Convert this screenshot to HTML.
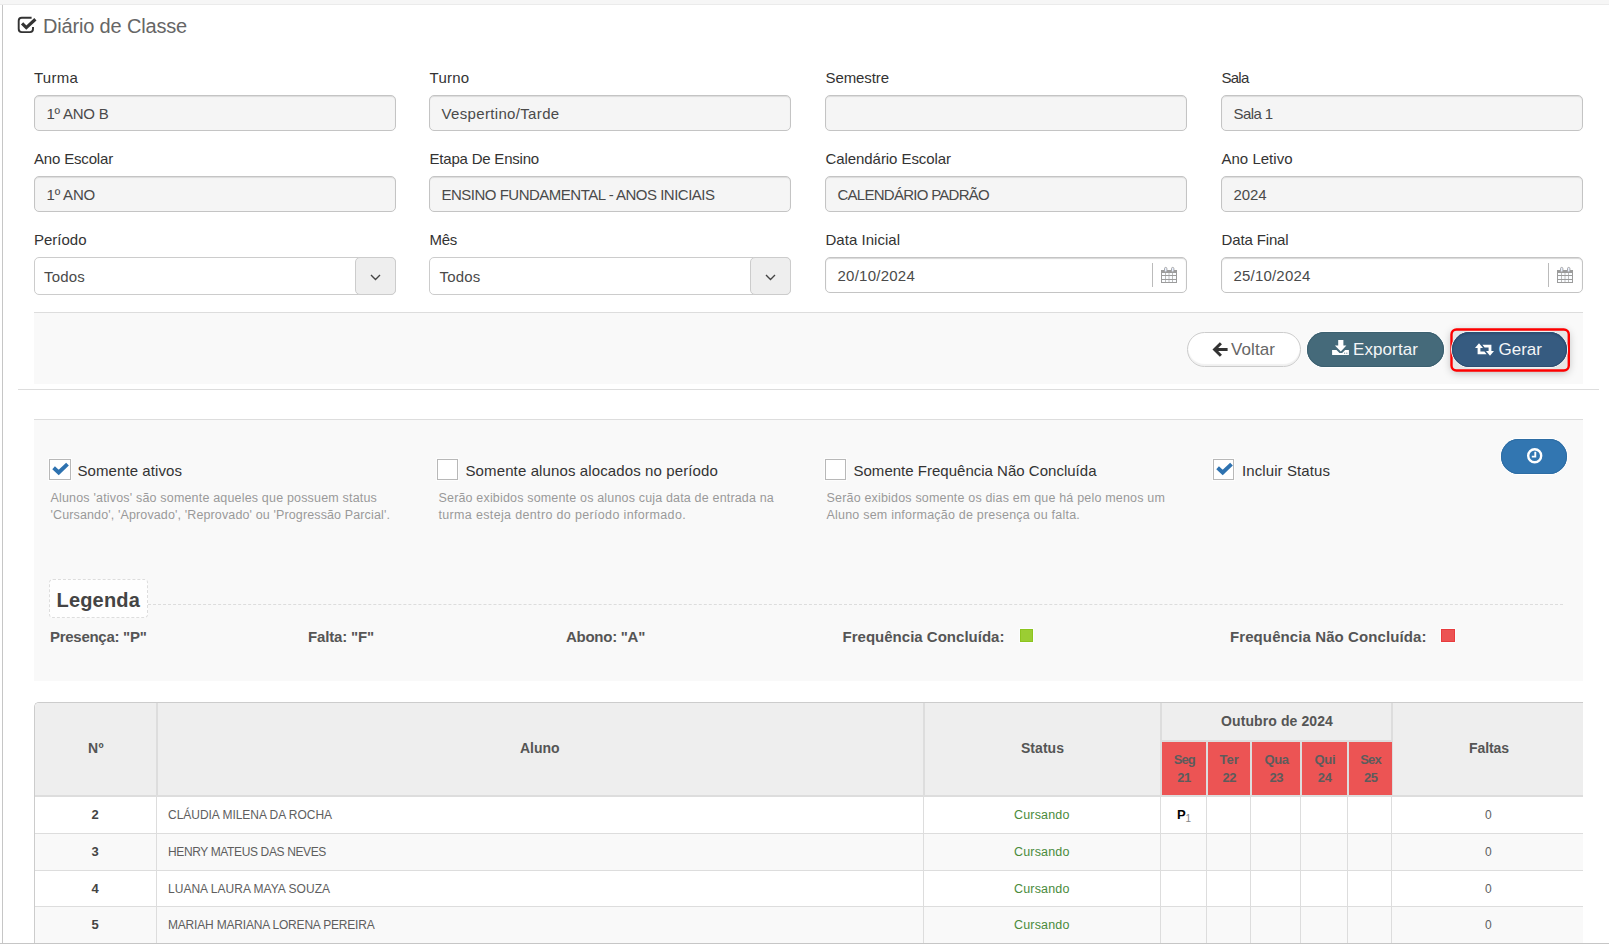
<!DOCTYPE html>
<html lang="pt-BR"><head><meta charset="utf-8"><title>Diário de Classe</title>
<style>
html,body{margin:0;padding:0}
body{width:1609px;height:944px;overflow:hidden;background:#fff;position:relative;font-family:"Liberation Sans",sans-serif;}
.a{position:absolute;box-sizing:border-box}
.t{position:absolute;white-space:nowrap;}
svg{position:absolute;display:block;overflow:visible}
.topband{left:0;top:0;width:1609px;height:4px;background:#f6f6f6}
.topline{left:0;top:4px;width:1609px;height:1px;background:#ebebeb}
.leftline{left:2px;top:5px;width:1px;height:939px;background:#c6c6c6}
.botline{left:0;top:943px;width:1609px;height:1px;background:#c6c6c6}
.inp{height:36px;width:362px;border:1px solid #c4c4c4;border-radius:5px;background:#f5f5f5;box-shadow:inset 0 1px 1px rgba(0,0,0,.10)}
.inp.w{background:#fff;box-shadow:inset 0 1px 1px rgba(0,0,0,.16)}
.sel{height:38px;width:362px;border:1px solid #ccc;border-radius:5px;background:#fff}
.sel .arr{position:absolute;right:-1px;top:-1px;width:41px;height:38px;box-sizing:border-box;border:1px solid #ccc;border-radius:5px;background:#eee}
.sep{width:1px;height:24px;background:#bbb}
.panel{left:34px;width:1549px;background:#f9f9f9;border-top:1px solid #ddd}
.hr{left:18px;top:389px;width:1581px;height:1px;background:#ddd}
.btn{height:35px;border-radius:18px}
.btn.voltar{left:1187px;top:332px;width:114px;background:#fff;border:1px solid #ccc;box-shadow:inset 0 -2px 1px rgba(0,0,0,.06)}
.btn.exportar{left:1307px;top:332px;width:137px;background:#456a7a;box-shadow:0 0 0 1px #fff,inset 0 0 0 1px #3c6070}
.btn.gerar{left:1452px;top:332px;width:115px;background:#365b80;box-shadow:0 0 0 1px #f2f2f2,inset 0 0 0 1px #2d4e72,inset 0 2px 2px rgba(20,40,80,.25)}
.hl{left:1451px;top:329px;width:118px;height:42px;border-radius:6px;background:#e6e6e6;box-shadow:0 2px 8px rgba(0,0,0,.25)}
.btn.clock{left:1501px;top:439px;width:66px;background:#3276b1;box-shadow:0 0 0 1px #fff,inset 0 0 0 1px #2e6da4}
.cb{width:22px;height:21px;background:#fff;border:1px solid #b8b8b8;box-shadow:0 0 0 1px #fdfdfd}
.legend{left:49px;top:579px;width:99px;height:39px;border:1px dashed #ddd;border-radius:4px;background:#fefefe}
.dash{left:148px;top:604px;width:1415px;height:0;border-top:1px dashed #ddd}
.sq{width:14px;height:13px;top:629px;border:1px solid;box-shadow:0 0 0 1px #fbfefe}
/* table */
.tb{left:34px;top:702px;width:1549px;height:242px;background:#fff;border-left:1px solid #ccc;border-top:1px solid #ccc;border-top-left-radius:5px;overflow:hidden}
.thead{left:0;top:0;width:1549px;height:92px;background:#eee}
.hb{left:0;top:92px;width:1549px;height:2px;background:#ddd}
.row{left:0;width:1549px;height:36px}
.row.alt{background:#f9f9f9}
.rl{left:0;width:1549px;height:1px;background:#ddd}
.vl{top:0;width:1px;height:242px;background:#ddd}
.vh{top:0;width:2px;height:93px;background:#ddd}
.red{top:39px;height:53px;background:#ec5454}

</style></head><body>
<div class="a topband"></div><div class="a topline"></div><div class="a leftline"></div>
<!-- title icon -->
<svg style="left:17px;top:16px" width="21" height="18" viewBox="0 0 21 18"><path d="M14.6 1.8H4.7a3 3 0 0 0-3 3v8.3a3 3 0 0 0 3 3h8.3a3 3 0 0 0 3-3V10.9" fill="none" stroke="#333" stroke-width="1.9"/><path d="M5.1 7.4l4.2 4.2L18.4 3.2" fill="none" stroke="#333" stroke-width="3.2"/></svg>
<!-- form row 1 -->
<div class="a inp" style="left:34px;top:95px"></div>
<div class="a inp" style="left:429px;top:95px;width:362px"></div>
<div class="a inp" style="left:825px;top:95px"></div>
<div class="a inp" style="left:1221px;top:95px"></div>
<!-- form row 2 -->
<div class="a inp" style="left:34px;top:176px"></div>
<div class="a inp" style="left:429px;top:176px"></div>
<div class="a inp" style="left:825px;top:176px"></div>
<div class="a inp" style="left:1221px;top:176px"></div>
<!-- form row 3 -->
<div class="a sel" style="left:34px;top:257px"><div class="arr"><svg style="left:14.4px;top:15.6px" width="11" height="7" viewBox="0 0 11 7"><path d="M1 1l4.5 4.5L10 1" fill="none" stroke="#444" stroke-width="1.4"/></svg></div></div>
<div class="a sel" style="left:429px;top:257px"><div class="arr"><svg style="left:14.4px;top:15.6px" width="11" height="7" viewBox="0 0 11 7"><path d="M1 1l4.5 4.5L10 1" fill="none" stroke="#444" stroke-width="1.4"/></svg></div></div>
<div class="a inp w" style="left:825px;top:257px"></div>
<div class="a sep" style="left:1152px;top:263px"></div>
<svg class="cal" style="left:1161px;top:267px" width="16" height="16" viewBox="0 0 16 16"><rect x="0" y="3" width="16" height="13" fill="#9c9c9c"/><g fill="#fbfdff"><rect x="1" y="6" width="3" height="2"/><rect x="1" y="9" width="3" height="3"/><rect x="1" y="13" width="3" height="2"/><rect x="4.67" y="6" width="3" height="2"/><rect x="4.67" y="9" width="3" height="3"/><rect x="4.67" y="13" width="3" height="2"/><rect x="8.33" y="6" width="3" height="2"/><rect x="8.33" y="9" width="3" height="3"/><rect x="8.33" y="13" width="3" height="2"/><rect x="12" y="6" width="3" height="2"/><rect x="12" y="9" width="3" height="3"/><rect x="12" y="13" width="3" height="2"/></g><rect x="3.5" y="0.4" width="2.4" height="4.6" rx="1.2" fill="#e8efff" stroke="#a0a0a0" stroke-width="0.9"/><rect x="10.5" y="0.4" width="2.4" height="4.6" rx="1.2" fill="#e8efff" stroke="#a0a0a0" stroke-width="0.9"/></svg>
<div class="a inp w" style="left:1221px;top:257px"></div>
<div class="a sep" style="left:1548px;top:263px"></div>
<svg class="cal" style="left:1557px;top:267px" width="16" height="16" viewBox="0 0 16 16"><rect x="0" y="3" width="16" height="13" fill="#9c9c9c"/><g fill="#fbfdff"><rect x="1" y="6" width="3" height="2"/><rect x="1" y="9" width="3" height="3"/><rect x="1" y="13" width="3" height="2"/><rect x="4.67" y="6" width="3" height="2"/><rect x="4.67" y="9" width="3" height="3"/><rect x="4.67" y="13" width="3" height="2"/><rect x="8.33" y="6" width="3" height="2"/><rect x="8.33" y="9" width="3" height="3"/><rect x="8.33" y="13" width="3" height="2"/><rect x="12" y="6" width="3" height="2"/><rect x="12" y="9" width="3" height="3"/><rect x="12" y="13" width="3" height="2"/></g><rect x="3.5" y="0.4" width="2.4" height="4.6" rx="1.2" fill="#e8efff" stroke="#a0a0a0" stroke-width="0.9"/><rect x="10.5" y="0.4" width="2.4" height="4.6" rx="1.2" fill="#e8efff" stroke="#a0a0a0" stroke-width="0.9"/></svg>
<!-- buttons panel -->
<div class="a panel" style="top:312px;height:72px"></div>
<div class="a hr"></div>
<div class="a btn voltar"></div>
<svg style="left:1212px;top:341px" width="17" height="17" viewBox="0 0 17 17"><path d="M8.9 2.2L2.6 8.5l6.3 6.3M3.2 8.5h12.4" fill="none" stroke="#333" stroke-width="3" stroke-linejoin="miter"/></svg>
<div class="a btn exportar"></div>
<svg style="left:1332px;top:339px" width="18" height="17" viewBox="0 0 18 17"><path d="M6.2 0.9h5.2v5.7h3L8.8 12.6 2.9 6.6h3.3z" fill="#fff"/><path d="M0.1 10.9h4.4l3 3.1h2.6l3-3.1h3.8v5.1H0.1z" fill="#fff"/><rect x="12" y="13.6" width="1.2" height="1.2" fill="#7d97a3"/><rect x="14.2" y="13.6" width="1.2" height="1.2" fill="#7d97a3"/></svg>
<div class="a hl"></div>
<svg style="left:1448px;top:326px" width="124" height="48" viewBox="0 0 124 48"><rect x="3.5" y="3.5" width="117.3" height="41" rx="5" ry="5" fill="none" stroke="#fe0000" stroke-width="2.4"/></svg>
<div class="a btn gerar"></div>
<svg style="left:1475px;top:343px" width="19" height="13" viewBox="0 0 19 13"><path d="M4 0.3L0 5h2.6v6.2h9l-2.2-2.6H5.4V5H8z" fill="#fff"/><path d="M15 12.7L19 8h-2.6V1.8h-9l2.2 2.6h4V8H11z" fill="#fff"/></svg>
<!-- filter panel -->
<div class="a panel" style="top:419px;height:262px"></div>
<div class="a cb" style="left:49px;top:459px"></div>
<svg style="left:49px;top:459px" width="22" height="21" viewBox="0 0 22 21"><path d="M4.6 8.8l5.1 4.7L18.5 5.2" fill="none" stroke="#2e72b0" stroke-width="3.9"/></svg>
<div class="a cb" style="left:437px;top:459px;width:21px"></div>
<div class="a cb" style="left:825px;top:459px;width:21px"></div>
<div class="a cb" style="left:1213px;top:459px;width:21px"></div>
<svg style="left:1213px;top:459px" width="22" height="21" viewBox="0 0 22 21"><path d="M4.6 8.8l5.1 4.7L18.5 5.2" fill="none" stroke="#2e72b0" stroke-width="3.9"/></svg>
<div class="a btn clock"></div>
<svg style="left:1526.7px;top:448px" width="15.4" height="15.4" viewBox="0 0 15.4 15.4"><circle cx="7.7" cy="7.7" r="6.5" fill="none" stroke="#fff" stroke-width="2.4"/><path d="M8.3 3.8V8.6H4.8" fill="none" stroke="#fff" stroke-width="1.9"/></svg>
<div class="a dash"></div>
<div class="a legend"></div>
<div class="a sq" style="left:1020px;width:13px;background:#9bcd33;border-color:#8dc41e"></div>
<div class="a sq" style="left:1441px;background:#ec5353;border-color:#e83c3e"></div>
<!-- table -->
<div class="a tb">
 <div class="a thead"></div>
 <div class="a row" style="top:94px"></div>
 <div class="a row alt" style="top:131px"></div>
 <div class="a row" style="top:168px"></div>
 <div class="a row alt" style="top:204px;height:40px"></div>
 <div class="a rl" style="top:130px"></div><div class="a rl" style="top:167px"></div><div class="a rl" style="top:203px"></div>
 <div class="a vl" style="left:121px"></div><div class="a vl" style="left:888px"></div><div class="a vl" style="left:1125px"></div>
 <div class="a vl" style="left:1171px;top:94px"></div><div class="a vl" style="left:1215px;top:94px"></div><div class="a vl" style="left:1265px;top:94px"></div><div class="a vl" style="left:1312px;top:94px"></div><div class="a vl" style="left:1356px"></div>
 <div class="a vh" style="left:121px"></div><div class="a vh" style="left:888px"></div><div class="a vh" style="left:1125px"></div><div class="a vh" style="left:1356px"></div>
 <div class="a" style="left:1127px;top:37px;width:229px;height:2px;background:#ddd"></div>
 <div class="a" style="left:1127px;top:39px;width:229px;height:53px;background:#ddd"></div>
 <div class="a red" style="left:1127px;width:44px"></div>
 <div class="a red" style="left:1173px;width:42px"></div>
 <div class="a red" style="left:1217px;width:48px"></div>
 <div class="a red" style="left:1267px;width:45px"></div>
 <div class="a red" style="left:1314px;width:43px"></div>
 <div class="a hb"></div>
</div>
<div class="a botline"></div>

<div id="texts">
<span class="t" id="t0" style="left:43px;top:12.00px;font-size:20px;line-height:28px;color:#666;letter-spacing:-0.171px;">Diário de Classe</span>
<span class="t" id="t1" style="left:34px;top:67.00px;font-size:15px;line-height:21px;color:#333;letter-spacing:0.244px;">Turma</span>
<span class="t" id="t2" style="left:429.5px;top:67.00px;font-size:15px;line-height:21px;color:#333;letter-spacing:0.272px;">Turno</span>
<span class="t" id="t3" style="left:825.5px;top:67.00px;font-size:15px;line-height:21px;color:#333;letter-spacing:-0.088px;">Semestre</span>
<span class="t" id="t4" style="left:1221.5px;top:67.00px;font-size:15px;line-height:21px;color:#333;letter-spacing:-0.758px;">Sala</span>
<span class="t" id="t5" style="left:34px;top:148.00px;font-size:15px;line-height:21px;color:#333;letter-spacing:-0.170px;">Ano Escolar</span>
<span class="t" id="t6" style="left:429.5px;top:148.00px;font-size:15px;line-height:21px;color:#333;letter-spacing:-0.205px;">Etapa De Ensino</span>
<span class="t" id="t7" style="left:825.5px;top:148.00px;font-size:15px;line-height:21px;color:#333;letter-spacing:-0.069px;">Calendário Escolar</span>
<span class="t" id="t8" style="left:1221.5px;top:148.00px;font-size:15px;line-height:21px;color:#333;letter-spacing:0.011px;">Ano Letivo</span>
<span class="t" id="t9" style="left:34px;top:229.00px;font-size:15px;line-height:21px;color:#333;letter-spacing:-0.007px;">Período</span>
<span class="t" id="t10" style="left:429.5px;top:229.00px;font-size:15px;line-height:21px;color:#333;letter-spacing:-0.281px;">Mês</span>
<span class="t" id="t11" style="left:825.5px;top:229.00px;font-size:15px;line-height:21px;color:#333;letter-spacing:0.025px;">Data Inicial</span>
<span class="t" id="t12" style="left:1221.5px;top:229.00px;font-size:15px;line-height:21px;color:#333;letter-spacing:-0.138px;">Data Final</span>
<span class="t" id="t13" style="left:46.5px;top:103.00px;font-size:15px;line-height:21px;color:#4a4a4a;letter-spacing:-0.230px;">1º ANO B</span>
<span class="t" id="t14" style="left:441.5px;top:103.00px;font-size:15px;line-height:21px;color:#4a4a4a;letter-spacing:0.339px;">Vespertino/Tarde</span>
<span class="t" id="t15" style="left:1233.5px;top:103.00px;font-size:15px;line-height:21px;color:#4a4a4a;letter-spacing:-0.591px;">Sala 1</span>
<span class="t" id="t16" style="left:46.5px;top:184.00px;font-size:15px;line-height:21px;color:#4a4a4a;letter-spacing:-0.195px;">1º ANO</span>
<span class="t" id="t17" style="left:441.5px;top:184.00px;font-size:15px;line-height:21px;color:#4a4a4a;letter-spacing:-0.501px;">ENSINO FUNDAMENTAL - ANOS INICIAIS</span>
<span class="t" id="t18" style="left:837.5px;top:184.00px;font-size:15px;line-height:21px;color:#4a4a4a;letter-spacing:-0.732px;">CALENDÁRIO PADRÃO</span>
<span class="t" id="t19" style="left:1233.5px;top:184.00px;font-size:15px;line-height:21px;color:#4a4a4a;letter-spacing:-0.094px;">2024</span>
<span class="t" id="t20" style="left:44px;top:266.00px;font-size:15px;line-height:21px;color:#4a4a4a;letter-spacing:0.194px;">Todos</span>
<span class="t" id="t21" style="left:439.5px;top:266.00px;font-size:15px;line-height:21px;color:#4a4a4a;letter-spacing:0.194px;">Todos</span>
<span class="t" id="t22" style="left:837.5px;top:265.00px;font-size:15px;line-height:21px;color:#4a4a4a;letter-spacing:0.242px;">20/10/2024</span>
<span class="t" id="t23" style="left:1233.5px;top:265.00px;font-size:15px;line-height:21px;color:#4a4a4a;letter-spacing:0.192px;">25/10/2024</span>
<span class="t" id="t24" style="left:1231px;top:338.00px;font-size:17px;line-height:24px;color:#666;letter-spacing:0.086px;">Voltar</span>
<span class="t" id="t25" style="left:1353px;top:338.00px;font-size:17px;line-height:24px;color:#f4f6f7;letter-spacing:0.094px;">Exportar</span>
<span class="t" id="t26" style="left:1498.5px;top:338.00px;font-size:17px;line-height:24px;color:#f4f6f7;letter-spacing:0.006px;">Gerar</span>
<span class="t" id="t27" style="left:77.5px;top:460.00px;font-size:15px;line-height:21px;color:#333;letter-spacing:0.079px;">Somente ativos</span>
<span class="t" id="t28" style="left:465.5px;top:460.00px;font-size:15px;line-height:21px;color:#333;letter-spacing:0.117px;">Somente alunos alocados no período</span>
<span class="t" id="t29" style="left:853.5px;top:460.00px;font-size:15px;line-height:21px;color:#333;letter-spacing:0.011px;">Somente Frequência Não Concluída</span>
<span class="t" id="t30" style="left:1242px;top:460.00px;font-size:15px;line-height:21px;color:#333;letter-spacing:0.092px;">Incluir Status</span>
<span class="t" id="t31" style="left:50.5px;top:489.00px;font-size:12.5px;line-height:18px;color:#999;letter-spacing:0.180px;">Alunos 'ativos' são somente aqueles que possuem status</span>
<span class="t" id="t32" style="left:50.5px;top:506.00px;font-size:12.5px;line-height:18px;color:#999;letter-spacing:0.129px;">'Cursando', 'Aprovado', 'Reprovado' ou 'Progressão Parcial'.</span>
<span class="t" id="t33" style="left:438.5px;top:489.00px;font-size:12.5px;line-height:18px;color:#999;letter-spacing:0.171px;">Serão exibidos somente os alunos cuja data de entrada na</span>
<span class="t" id="t34" style="left:438.5px;top:506.00px;font-size:12.5px;line-height:18px;color:#999;letter-spacing:0.342px;">turma esteja dentro do período informado.</span>
<span class="t" id="t35" style="left:826.5px;top:489.00px;font-size:12.5px;line-height:18px;color:#999;letter-spacing:0.182px;">Serão exibidos somente os dias em que há pelo menos um</span>
<span class="t" id="t36" style="left:826.5px;top:506.00px;font-size:12.5px;line-height:18px;color:#999;letter-spacing:0.212px;">Aluno sem informação de presença ou falta.</span>
<span class="t" id="t37" style="left:56.5px;top:586.00px;font-size:20px;line-height:28px;color:#444;font-weight:700;letter-spacing:0.179px;">Legenda</span>
<span class="t" id="t38" style="left:50px;top:626.00px;font-size:15px;line-height:21px;color:#555;font-weight:700;letter-spacing:-0.278px;">Presença: "P"</span>
<span class="t" id="t39" style="left:308px;top:626.00px;font-size:15px;line-height:21px;color:#555;font-weight:700;letter-spacing:-0.156px;">Falta: "F"</span>
<span class="t" id="t40" style="left:566px;top:626.00px;font-size:15px;line-height:21px;color:#555;font-weight:700;letter-spacing:-0.270px;">Abono: "A"</span>
<span class="t" id="t41" style="left:842.5px;top:626.00px;font-size:15px;line-height:21px;color:#555;font-weight:700;letter-spacing:0.014px;">Frequência Concluída:</span>
<span class="t" id="t42" style="left:1230px;top:626.00px;font-size:15px;line-height:21px;color:#555;font-weight:700;letter-spacing:0.092px;">Frequência Não Concluída:</span>
<span class="t" id="t43" style="left:88px;top:738.00px;font-size:14px;line-height:20px;color:#555;font-weight:700;letter-spacing:0.383px;">Nº</span>
<span class="t" id="t44" style="left:520px;top:738.00px;font-size:14px;line-height:20px;color:#555;font-weight:700;letter-spacing:-0.031px;">Aluno</span>
<span class="t" id="t45" style="left:1021px;top:738.00px;font-size:14px;line-height:20px;color:#555;font-weight:700;letter-spacing:0.034px;">Status</span>
<span class="t" id="t46" style="left:1469px;top:738.00px;font-size:14px;line-height:20px;color:#555;font-weight:700;letter-spacing:-0.078px;">Faltas</span>
<span class="t" id="t47" style="left:1221px;top:711.00px;font-size:14px;line-height:20px;color:#555;font-weight:700;letter-spacing:0.102px;">Outubro de 2024</span>
<span class="t" id="t48" style="left:1173.8px;top:751.00px;font-size:13px;line-height:18px;color:#5c5c5c;font-weight:700;letter-spacing:-0.948px;">Seg</span>
<span class="t" id="t49" style="left:1177.3px;top:769.00px;font-size:13px;line-height:18px;color:#5c5c5c;font-weight:700;letter-spacing:-0.634px;">21</span>
<span class="t" id="t50" style="left:1219.5px;top:751.00px;font-size:13px;line-height:18px;color:#5c5c5c;font-weight:700;letter-spacing:-0.022px;">Ter</span>
<span class="t" id="t51" style="left:1222.6px;top:769.00px;font-size:13px;line-height:18px;color:#5c5c5c;font-weight:700;letter-spacing:-0.484px;">22</span>
<span class="t" id="t52" style="left:1264.4px;top:751.00px;font-size:13px;line-height:18px;color:#5c5c5c;font-weight:700;letter-spacing:-0.366px;">Qua</span>
<span class="t" id="t53" style="left:1269.5px;top:769.00px;font-size:13px;line-height:18px;color:#5c5c5c;font-weight:700;letter-spacing:-0.384px;">23</span>
<span class="t" id="t54" style="left:1314.5px;top:751.00px;font-size:13px;line-height:18px;color:#5c5c5c;font-weight:700;letter-spacing:-0.324px;">Qui</span>
<span class="t" id="t55" style="left:1317.7px;top:769.00px;font-size:13px;line-height:18px;color:#5c5c5c;font-weight:700;letter-spacing:-0.234px;">24</span>
<span class="t" id="t56" style="left:1360.3px;top:751.00px;font-size:13px;line-height:18px;color:#5c5c5c;font-weight:700;letter-spacing:-0.847px;">Sex</span>
<span class="t" id="t57" style="left:1364px;top:769.00px;font-size:13px;line-height:18px;color:#5c5c5c;font-weight:700;letter-spacing:-0.434px;">25</span>
<span class="t" id="t58" style="left:91.5px;top:806.00px;font-size:13px;line-height:18px;color:#444;font-weight:700;">2</span>
<span class="t" id="t59" style="left:168px;top:807.00px;font-size:12px;line-height:17px;color:#5e5e5e;letter-spacing:-0.031px;">CLÁUDIA MILENA DA ROCHA</span>
<span class="t" id="t60" style="left:1014px;top:806.00px;font-size:12.5px;line-height:18px;color:#4a8b3c;letter-spacing:0.162px;">Cursando</span>
<span class="t" id="t61" style="left:1485px;top:807.00px;font-size:12px;line-height:17px;color:#5e5e5e;">0</span>
<span class="t" id="t62" style="left:91.5px;top:843.00px;font-size:13px;line-height:18px;color:#444;font-weight:700;">3</span>
<span class="t" id="t63" style="left:168px;top:844.00px;font-size:12px;line-height:17px;color:#5e5e5e;letter-spacing:-0.366px;">HENRY MATEUS DAS NEVES</span>
<span class="t" id="t64" style="left:1014px;top:843.00px;font-size:12.5px;line-height:18px;color:#4a8b3c;letter-spacing:0.162px;">Cursando</span>
<span class="t" id="t65" style="left:1485px;top:844.00px;font-size:12px;line-height:17px;color:#5e5e5e;">0</span>
<span class="t" id="t66" style="left:91.5px;top:880.00px;font-size:13px;line-height:18px;color:#444;font-weight:700;">4</span>
<span class="t" id="t67" style="left:168px;top:881.00px;font-size:12px;line-height:17px;color:#5e5e5e;letter-spacing:0.018px;">LUANA LAURA MAYA SOUZA</span>
<span class="t" id="t68" style="left:1014px;top:880.00px;font-size:12.5px;line-height:18px;color:#4a8b3c;letter-spacing:0.162px;">Cursando</span>
<span class="t" id="t69" style="left:1485px;top:881.00px;font-size:12px;line-height:17px;color:#5e5e5e;">0</span>
<span class="t" id="t70" style="left:91.5px;top:916.00px;font-size:13px;line-height:18px;color:#444;font-weight:700;">5</span>
<span class="t" id="t71" style="left:168px;top:917.00px;font-size:12px;line-height:17px;color:#5e5e5e;letter-spacing:-0.192px;">MARIAH MARIANA LORENA PEREIRA</span>
<span class="t" id="t72" style="left:1014px;top:916.00px;font-size:12.5px;line-height:18px;color:#4a8b3c;letter-spacing:0.162px;">Cursando</span>
<span class="t" id="t73" style="left:1485px;top:917.00px;font-size:12px;line-height:17px;color:#5e5e5e;">0</span>
<span class="t" id="t74" style="left:1177px;top:806.00px;font-size:13px;line-height:18px;color:#000;font-weight:700;">P</span>
<span class="t" id="t75" style="left:1185.6px;top:812.00px;font-size:10px;line-height:14px;color:#858585;">1</span>
</div>
</body></html>
